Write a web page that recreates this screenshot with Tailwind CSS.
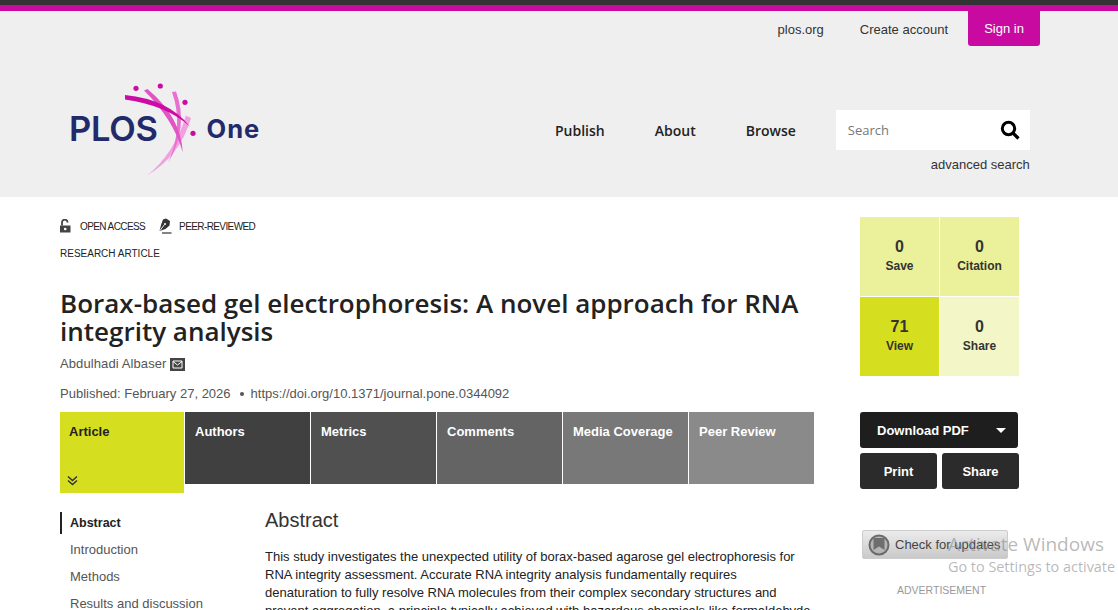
<!DOCTYPE html>
<html lang="en">
<head>
    <meta charset="UTF-8">
    <meta name="viewport" content="width=device-width, initial-scale=1.0">
    <title>Borax-based gel electrophoresis</title>
    <script src="https://cdn.jsdelivr.net/npm/@tailwindcss/browser@4"></script>
</head>
<body class="relative h-[610px] overflow-hidden bg-white font-['Liberation_Sans',sans-serif] text-[#333]">
    <!-- header -->
    <header class="h-[197px] bg-[#efefef] border-t-[5px] border-[#333]">
        <div class="h-[6px] bg-[#c90aa0]"></div>
        <div class="flex justify-end items-start pr-[78px] text-[13px]">
            <a class="mt-[9px] text-[#333]">plos.org</a>
            <a class="mt-[9px] ml-[36px] text-[#333]">Create account</a>
            <a class="ml-[20px] w-[72px] h-[35px] flex items-center justify-center bg-[#c90aa0] text-white rounded-b-[3px]">Sign in</a>
        </div>
        <div class="flex items-start">
            <svg class="ml-[68px] mt-[36px] shrink-0" width="200" height="96" viewBox="0 0 200 96">
                <path d="M118 33.500 L123 36 Q112 74 79.300 93.300 Q106 72 118 33.500Z" fill="#f2a0e2"/>
                <path d="M104 10 L108 9.500 Q121 44 100.300 80.700 Q116 44 104 10Z" fill="#ea6fd0"/>
                <path d="M76 8.500 L79.500 7 Q113 35 114.700 70.300 Q106 38 76 8.500Z" fill="#e055c4"/>
                <path d="M57 13 Q101 17.400 122 44.700 Q99 23.400 57 17.500Z" fill="#cc0aa5"/>
                <circle cx="68" cy="6.300" r="2.600" fill="#cc0aa5"/>
                <circle cx="92.300" cy="4" r="2.600" fill="#cc0aa5"/>
                <circle cx="117" cy="20.300" r="2.600" fill="#cc0aa5"/>
                <circle cx="125" cy="51.300" r="2.600" fill="#cc0aa5"/>
                <text x="1" y="58.700" font-family="Inter" font-weight="600" font-size="34.500" fill="#232a6b" letter-spacing="-0.300">PLOS</text>
                <text x="138.500" y="55.700" font-family="Inter" font-weight="700" font-size="25.500" fill="#232a6b" letter-spacing="1">One</text>
            </svg>
            <nav class="flex shrink-0 ml-[287px] mt-[75px] gap-[50px] font-['Open_Sans',sans-serif] font-semibold text-sm text-[#222] leading-[20px]">
                <a>Publish</a>
                <a>About</a>
                <a>Browse</a>
            </nav>
            <div class="ml-[40px] mt-[64px] w-[194px] shrink-0">
                <div class="h-[40px] bg-white flex items-center justify-between pl-[12px] pr-[10px]">
                    <span class="pt-[1px] font-['Open_Sans',sans-serif] text-[13px] text-[#777]">Search</span>
                    <svg width="20" height="20" viewBox="0 0 20 20" fill="none" stroke="#000">
                        <circle cx="8.500" cy="8.500" r="6.200" stroke-width="3"/>
                        <path d="M13 13 L18.500 18.500" stroke-width="3.200"/>
                    </svg>
                </div>
                <div class="mt-[7px] text-right text-[13px] leading-[16px]">advanced search</div>
            </div>
        </div>
    </header>

    <div class="flex">
        <!-- article column -->
        <main class="ml-[60px] w-[754px] shrink-0">
            <div class="flex items-center mt-[21px] h-[16px] text-[10px] tracking-[-0.6px] text-[#222]">
                <svg width="12" height="14" viewBox="0 0 12 14" fill="#444">
                    <path d="M0 6.500h10.500v7H0z"/>
                    <path d="M2 6.500V3.500a2.800 2.800 0 0 1 5.600 0" fill="none" stroke="#444" stroke-width="1.800"/>
                    <circle cx="5.200" cy="10" r="1.300" fill="#fff"/>
                </svg>
                <span class="ml-[8px] pt-[1px]">OPEN ACCESS</span>
                <svg class="ml-[13px]" width="14" height="16" viewBox="0 0 14 16" fill="#333">
                    <path d="M5 1.500 L8 0.500 L12 3 L11.500 7.500 L7.500 11 L1.500 13 L3 7Z"/>
                    <path d="M2 12.500 L6.500 6.500" stroke="#fff" stroke-width="0.900"/>
                    <circle cx="7" cy="6" r="1" fill="#fff"/>
                    <path d="M4 15h9.500" stroke="#333" stroke-width="1.200"/>
                </svg>
                <span class="ml-[7px] pt-[1px]">PEER-REVIEWED</span>
            </div>
            <div class="mt-[14px] text-[10px] leading-[12px] text-[#222]">RESEARCH ARTICLE</div>
            <h1 class="mt-[29px] font-['Open_Sans',sans-serif] font-semibold text-[26px] leading-[28px] text-[#222]">Borax-based gel electrophoresis: A novel approach for RNA integrity analysis</h1>
            <div class="mt-[11px] flex items-center h-[16px] text-[13px] tracking-[0.1px] text-[#555]">
                <span>Abdulhadi Albaser</span>
                <span class="ml-[3px] w-[15px] h-[13px] bg-[#444] flex items-center justify-center">
                    <svg width="11" height="9" viewBox="0 0 11 9" fill="none" stroke="#fff" stroke-width="1">
                        <path d="M1 1h9v7H1z M1 1.500 L5.500 5 L10 1.500"/>
                    </svg>
                </span>
            </div>
            <div class="mt-[14px] flex items-center h-[16px] text-[13px] text-[#555]">
                <span>Published: February 27, 2026</span>
                <span class="ml-[9px] w-[4px] h-[4px] rounded-full bg-[#555]"></span>
                <span class="ml-[7px]">https://doi.org/10.1371/journal.pone.0344092</span>
            </div>
            <!-- tabs -->
            <div class="mt-[10px] flex items-start gap-[1px] text-[13px] font-bold text-white h-[81px]">
                <div class="w-[124px] h-[81px] bg-[#d6df1f] text-[#222] pl-[9px] pt-[12px] flex flex-col justify-between pb-[7px]">
                    <span class="leading-[16px]">Article</span>
                    <svg class="-ml-[2px]" width="11" height="11" viewBox="0 0 11 11" fill="none" stroke="#333" stroke-width="1.500">
                        <path d="M1 1.500 L5.500 5.500 L10 1.500 M1 5.500 L5.500 9.500 L10 5.500"/>
                    </svg>
                </div>
                <div class="w-[125px] h-[72px] bg-[#404040] pl-[10px] pt-[12px] leading-[16px]">Authors</div>
                <div class="w-[125px] h-[72px] bg-[#505050] pl-[10px] pt-[12px] leading-[16px]">Metrics</div>
                <div class="w-[125px] h-[72px] bg-[#646464] pl-[10px] pt-[12px] leading-[16px]">Comments</div>
                <div class="w-[125px] h-[72px] bg-[#787878] pl-[10px] pt-[12px] leading-[16px]">Media Coverage</div>
                <div class="w-[125px] h-[72px] bg-[#8a8a8a] pl-[10px] pt-[12px] leading-[16px]">Peer Review</div>
            </div>
            <!-- body -->
            <div class="flex mt-[18px]">
                <ul class="w-[205px] shrink-0 text-[13px] text-[#555] leading-[27px] mt-[1px]">
                    <li class="border-l-2 border-[#222] pl-[8px] font-bold text-[#222] h-[22px] leading-[22px] mb-[2px] text-[12.500px]">Abstract</li>
                    <li class="pl-[10px]">Introduction</li>
                    <li class="pl-[10px]">Methods</li>
                    <li class="pl-[10px]">Results and discussion</li>
                </ul>
                <article class="-mt-[3px]">
                    <h2 class="text-xl leading-[24px] text-[#333] font-normal">Abstract</h2>
                    <p class="mt-[16px] text-[13px] leading-[18px] text-[#222] w-[549px] whitespace-nowrap">This study investigates the unexpected utility of borax-based agarose gel electrophoresis for<br>RNA integrity assessment. Accurate RNA integrity analysis fundamentally requires<br>denaturation to fully resolve RNA molecules from their complex secondary structures and<br>prevent aggregation, a principle typically achieved with hazardous chemicals like formaldehyde</p>
                </article>
            </div>
        </main>

        <!-- side column -->
        <aside class="ml-[46px] w-[160px] shrink-0 pt-[20px]">
            <div class="grid grid-cols-2 gap-[1px] w-[159px] text-[#333] font-bold text-center">
                <div class="h-[79px] bg-[#ebf09b] pt-[20px]"><div class="text-base leading-[20px]">0</div><div class="text-xs leading-[18px]">Save</div></div>
                <div class="h-[79px] bg-[#ebf09b] pt-[20px]"><div class="text-base leading-[20px]">0</div><div class="text-xs leading-[18px]">Citation</div></div>
                <div class="h-[79px] bg-[#d6df1f] pt-[20px]"><div class="text-base leading-[20px]">71</div><div class="text-xs leading-[18px]">View</div></div>
                <div class="h-[79px] bg-[#f3f6c6] pt-[20px]"><div class="text-base leading-[20px]">0</div><div class="text-xs leading-[18px]">Share</div></div>
            </div>
            <div class="mt-[36px] w-[158px] h-[36px] pt-[1px] rounded-[3px] bg-[#1e1e1e] text-white text-[13px] font-bold flex items-center justify-between pl-[17px] pr-[12px]">
                <span>Download PDF</span>
                <span class="w-0 h-0 border-x-[5px] border-x-transparent border-t-[5px] border-t-white"></span>
            </div>
            <div class="mt-[5px] flex gap-[5px] text-white text-[13px] font-bold">
                <div class="w-[77px] h-[36px] pt-[1px] rounded-[3px] bg-[#2b2b2b] flex items-center justify-center">Print</div>
                <div class="w-[77px] h-[36px] pt-[1px] rounded-[3px] bg-[#2b2b2b] flex items-center justify-center">Share</div>
            </div>
            <div class="mt-[41px] ml-[2px] w-[146px] h-[29px] border border-[#ccc] rounded-[2px] bg-gradient-to-b from-[#ececec] to-[#c9c9c9] flex items-center pl-[5px] text-[13px] text-[#444]">
                <svg width="22" height="22" viewBox="0 0 22 22">
                    <circle cx="11" cy="11" r="9.500" fill="#b5b5b5" stroke="#6a6a6a" stroke-width="2"/>
                    <path d="M5.500 4h11v12l-5.500-3.500-5.500 3.500z" fill="#6e6e6e"/>
                </svg>
                <span class="ml-[5px]">Check for updates</span>
            </div>
            <div class="mt-[25px] ml-[37px] text-[10.500px] leading-[12px] text-[#999]">ADVERTISEMENT</div>
        </aside>
    </div>

    <!-- windows activation watermark -->
    <div class="absolute left-[948px] top-[532px] font-['Open_Sans',sans-serif] text-[#8a8a8a]/60 whitespace-nowrap">
        <div class="text-[19px] leading-[24px]">Activate Windows</div>
        <div class="text-[14.400px] leading-[20px] mt-[1px]">Go to Settings to activate</div>
    </div>
</body>
</html>
